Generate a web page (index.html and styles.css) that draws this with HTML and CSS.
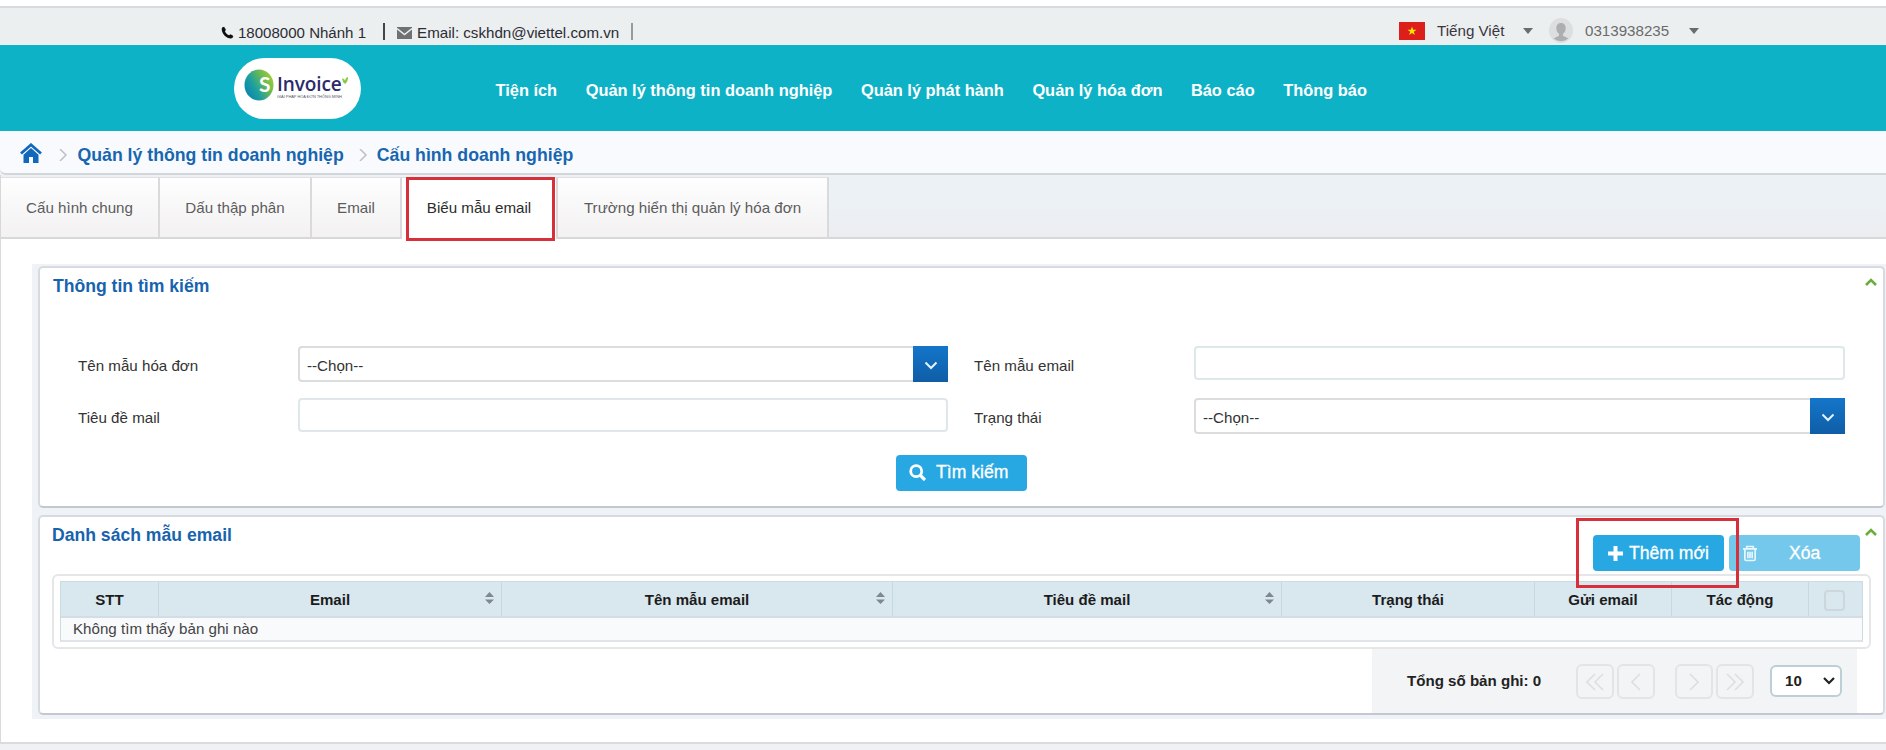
FILE: index.html
```html
<!DOCTYPE html>
<html lang="vi">
<head>
<meta charset="utf-8">
<title>SInvoice</title>
<link rel="stylesheet" href="styles.css">
</head>
<body>
<div class="topbar">
  <div class="contact">
    <svg class="phone" width="13" height="13" viewBox="0 0 14 14"><path d="M3.300.8 1.200 1.600C.2 3.400.9 7.300 3.700 10.200S10.300 13.900 12.300 13L13.300 10.900 10.300 9 8.700 10C7.300 9.700 4.600 7 4.300 5.600L5.300 4Z"/></svg>
    <span>18008000 Nhánh 1</span><i class="bar"></i>
    <svg class="mail" width="15" height="12" viewBox="0 0 15 12"><path fill="#6f7173" d="M0 0H15V12H0Z"/><path d="M0 1.500 7.500 7.500 15 1.500" fill="none" stroke="#ebeff0" stroke-width="1.500"/></svg>
    <span>Email: cskhdn@viettel.com.vn</span><i class="bar light"></i>
  </div>
  <div class="account">
    <svg width="26" height="18" viewBox="0 0 26 18"><path fill="#dc1f1a" d="M0 0H26V18H0Z"/><path fill="#ffe600" d="m13 4.500 1.100 3.200h3.400l-2.700 2 1 3.200L13 11l-2.800 1.900 1-3.200-2.700-2h3.400Z"/></svg>
    <span class="lang">Tiếng Việt</span><i class="caret"></i>
    <svg class="avatar" width="24" height="25" viewBox="0 0 24 25"><ellipse cx="12" cy="12.500" rx="12" ry="12.500" fill="#dcdedf"/><path fill="#adaeb0" d="M12 5c-3 0-4.700 2-4.700 5 0 2.600 1 4.600 2.700 5.700v2.100L4.600 20.600A12 12.500 0 0 0 19.400 20.600L14 17.800v-2.100c1.700-1.100 2.700-3.100 2.700-5.700 0-3-1.700-5-4.700-5Z"/></svg>
    <span class="user">0313938235</span><i class="caret"></i>
  </div>
</div>
<header class="header">
  <div class="logo">
    <svg class="mark" width="30" height="32" viewBox="0 0 30 32"><defs><linearGradient id="lg" x1="0" y1=".8" x2="1" y2=".2"><stop offset="0" stop-color="#0c80b0"/><stop offset=".35" stop-color="#1c9fa0"/><stop offset=".7" stop-color="#6dbb50"/><stop offset="1" stop-color="#a4cf3a"/></linearGradient></defs><ellipse cx="15" cy="16" rx="14.500" ry="15.500" fill="url(#lg)"/><text class="mark-s" x="15" y="23">S</text></svg>
    <div class="words"><span class="word">Invoice</span><span class="tagline">GIẢI PHÁP HÓA ĐƠN THÔNG MINH</span></div>
    <svg class="leaf" width="6" height="7" viewBox="0 0 6 7"><path d="M0 1.500Q2 1 3 3.500 4 0 6 0 6 5 3 7 .5 5 0 1.500Z" fill="#8dc63f"/></svg>
  </div>
  <nav class="nav"><a>Tiện ích</a><a>Quản lý thông tin doanh nghiệp</a><a>Quản lý phát hành</a><a>Quản lý hóa đơn</a><a>Báo cáo</a><a>Thông báo</a></nav>
</header>
<div class="crumbs">
  <svg class="home" width="22" height="20" viewBox="0 0 22 20"><path d="M1 10.500 11 1.800 21 10.500" fill="none" stroke="#1268b9" stroke-width="2.800"/><path fill="#1268b9" d="m11 5 7.500 6.800V20H13v-6H9v6H3.500v-8.200Z"/></svg>
  <svg class="sep" width="8" height="12" viewBox="0 0 8 12"><path d="m1 0 6 6-6 6"/></svg>
  <a>Quản lý thông tin doanh nghiệp</a>
  <svg class="sep second" width="8" height="12" viewBox="0 0 8 12"><path d="m1 0 6 6-6 6"/></svg>
  <a>Cấu hình doanh nghiệp</a>
</div>
<div class="tabs">
  <div class="tab t1">Cấu hình chung</div><div class="tab t2">Dấu thập phân</div><div class="tab t3">Email</div><div class="tab active">Biểu mẫu email<i class="mark-box"></i></div><div class="tab t5">Trường hiển thị quản lý hóa đơn</div>
</div>
<main class="content">
  <div class="stack">
    <section class="panel search">
      <div class="panel-head"><h2>Thông tin tìm kiếm</h2><svg class="fold" width="12" height="8" viewBox="0 0 12 8"><path d="m1 7 5-5 5 5"/></svg></div>
      <div class="form">
        <label>Tên mẫu hóa đơn</label>
        <div class="select"><span>--Chọn--</span><b><svg width="14" height="9" viewBox="0 0 14 9"><path d="m1.500 1.500 5.500 5.500 5.500-5.500"/></svg></b></div>
        <label>Tên mẫu email</label><div class="input"></div>
        <label>Tiêu đề mail</label><div class="input"></div>
        <label>Trạng thái</label>
        <div class="select"><span>--Chọn--</span><b><svg width="14" height="9" viewBox="0 0 14 9"><path d="m1.500 1.500 5.500 5.500 5.500-5.500"/></svg></b></div>
      </div>
      <div class="btn find"><svg width="17" height="17" viewBox="0 0 17 17"><circle cx="7.200" cy="7.200" r="5.500" fill="none" stroke="#fff" stroke-width="2.800"/><path d="m11 11 5 5" stroke="#fff" stroke-width="3.200"/></svg>Tìm kiếm</div>
    </section>
    <section class="panel list">
      <div class="panel-head"><h2>Danh sách mẫu email</h2>
        <div class="actions">
          <div class="btn add"><svg width="15" height="15" viewBox="0 0 15 15"><path d="M7.500 0v15M0 7.500h15" stroke="#fff" stroke-width="4"/></svg>Thêm mới<i class="mark-box"></i></div>
          <div class="btn del"><svg width="14" height="17" viewBox="0 0 15 17" fill="none" stroke="#e9f7fd" stroke-width="1.800"><path d="M0 3.500h15M4 3.500V1h7v2.500M2 4v10.500q0 1.500 1.500 1.500h8q1.500 0 1.500-1.500V4M5.200 6.500v7M7.500 6.500v7M9.800 6.500v7"/></svg><span>Xóa</span></div>
        </div>
        <svg class="fold" width="12" height="8" viewBox="0 0 12 8"><path d="m1 7 5-5 5 5"/></svg></div>
      <div class="table-wrap">
        <div class="table">
          <div class="row head">
            <div>STT</div>
            <div>Email<svg class="sort" width="9" height="12" viewBox="0 0 9 12"><path d="M0 5 4.500 0 9 5ZM0 7.500h9L4.500 12Z"/></svg></div>
            <div>Tên mẫu email<svg class="sort" width="9" height="12" viewBox="0 0 9 12"><path d="M0 5 4.500 0 9 5ZM0 7.500h9L4.500 12Z"/></svg></div>
            <div>Tiêu đề mail<svg class="sort" width="9" height="12" viewBox="0 0 9 12"><path d="M0 5 4.500 0 9 5ZM0 7.500h9L4.500 12Z"/></svg></div>
            <div>Trạng thái</div><div>Gửi email</div><div>Tác động</div><div><i class="check"></i></div>
          </div>
          <div class="empty">Không tìm thấy bản ghi nào</div>
        </div>
      </div>
      <div class="pager">
        <span class="total">Tổng số bản ghi: 0</span>
        <div class="pg"><svg width="18" height="18" viewBox="0 0 18 18"><path d="M9 1 1 9l8 8M17 1 9 9l8 8"/></svg></div>
        <div class="pg"><svg width="10" height="18" viewBox="0 0 10 18"><path d="M9 1 1 9l8 8"/></svg></div>
        <div class="pg next"><svg width="10" height="18" viewBox="0 0 10 18"><path d="m1 1 8 8-8 8"/></svg></div>
        <div class="pg"><svg width="18" height="18" viewBox="0 0 18 18"><path d="m1 1 8 8-8 8M9 1l8 8-8 8"/></svg></div>
        <div class="size">10<svg width="12" height="8" viewBox="0 0 12 8"><path d="m1 1 5 5 5-5" fill="none" stroke="#222" stroke-width="2.200"/></svg></div>
      </div>
    </section>
  </div>
</main>
</body>
</html>
```
FILE: styles.css
```css
* { box-sizing: border-box; }
body { margin: 0; width: 1886px; height: 750px; overflow: hidden; background: #f0f1f3; font: 15.15px/18px "Liberation Sans", Arial, sans-serif; color: #333; white-space: nowrap; }
svg { display: block; flex: none; }
.topbar { height: 45px; border-top: 6px solid #fff; background: #ebeff0; box-shadow: inset 0 2px 0 #d8dbde; display: flex; justify-content: space-between; padding: 0 187px 0 221px; }
.contact { display: flex; align-items: center; height: 39px; padding-top: 14px; color: #2c2c34; font-size: 15.05px; }
.phone { margin: 0 4px 0 0; fill: #111; }
.bar { width: 2px; height: 17px; background: #444; margin: -2px 12px 0 17px; }
.mail { margin-right: 5px; }
.contact span:nth-of-type(2) { font-size: 15.15px; }
.bar.light { background: #999; margin-left: 12px; }
.account { display: flex; align-items: center; align-self: flex-start; margin-top: 12px; height: 25px; }
.lang { margin: 0 18px 0 12px; width: 68px; color: #3a3540; }
.caret { border: solid transparent; border-width: 6px 5.5px 0; border-top-color: #6b6b6b; }
.avatar { margin: 0 12px 0 16px; }
.user { color: #6b6b6b; margin: 0 19px 0 0; width: 85px; }
.header { height: 86px; background: #0db2c6; display: flex; padding-left: 234px; }
.logo { width: 127px; height: 61px; margin-top: 13px; border-radius: 32px; background: #fff; display: flex; padding: 11px 0 0 10px; }
.mark-s { font: 700 21px Lato, sans-serif; fill: #fff; }
.words { display: flex; flex-direction: column; padding: 5px 0 0 3px; width: 68px; }
.word { font: 600 19px/20px "Open Sans", sans-serif; color: #2b2a6b; letter-spacing: -.1px; }
.tagline { font: 3.900px/5px "Liberation Sans", Arial, sans-serif; color: #556; }
.leaf { margin-top: 8px; }
.nav { display: flex; gap: 28.5px; margin-left: 134.500px; padding-top: 36px; font-weight: 700; font-size: 16.400px; color: #fff; }
.crumbs { height: 44px; background: #f9fafd; border-bottom: 2px solid #d3d6d9; display: flex; align-items: center; padding: 0 0 0 20px; font-weight: 700; font-size: 17.700px; color: #1766b0; line-height: 20px; border-bottom-left-radius: 6px; }
.crumbs a { margin-top: 6px; }
.home { margin-top: 1px; }
.sep { margin: 5px 10.500px 0 17px; fill: none; stroke: #bcbfc4; stroke-width: 1.500; }
.sep.second { margin: 5px 10px 0 15px; }
.tabs { height: 64px; background: linear-gradient(#ecf1f6 50%, #ecedf0); border-bottom: 2px solid #d6d8da; padding-top: 2px; display: flex; border-left: 1px solid #d6d8da; }
.tab { position: relative; height: 60px; border-right: 2px solid #dadadc; border-top: 1px solid #e0e0e2; background: linear-gradient(#fefefe, #f3f1f2); text-align: center; padding-top: 21px; color: #5c5c5c; }
.t1 { width: 159px; }
.t2 { width: 152px; }
.t3 { width: 90px; }
.t5 { width: 271px; }
.tab.active { width: 156px; height: 62px; background: #fff; color: #2c2c2c; }
.mark-box { position: absolute; border: 3px solid #d6303a; }
.tab .mark-box { left: 4px; top: -1px; width: 149px; height: 64px; }
.content { height: 505px; border-left: 1px solid #d8dadc; border-bottom: 2px solid #d9dbde; background: #fff; padding: 25px 0 0 31px; }
.stack { height: 455px; background: #eff2f6; padding: 2px 1px 0 6px; }
.panel { background: #fff; border: 2px solid #d7dbe0; border-bottom-color: #c3c8d0; border-radius: 5px; }
.search { height: 242px; }
.list { height: 200px; margin-top: 7px; }
.panel-head { display: flex; justify-content: space-between; padding: 9px 6px 0 13px; height: 58px; }
.panel-head h2 { margin: 0; font-size: 17.600px; line-height: 18px; color: #1763ae; }
.fold { fill: none; stroke: #6aae3a; stroke-width: 2.600; }
.search .fold { margin-top: 1px; }
.form { display: grid; grid-template-columns: 220px 650px 246px 651px; column-gap: 0; row-gap: 16px; padding-left: 38px; margin-top: 20px; }
.form label { padding-top: 11px; height: 36px; }
.form label:nth-of-type(even) { padding-left: 26px; }
.input { height: 34px; border: 2px solid #dee8ea; border-radius: 4px; }
.select { height: 36px; border: 2px solid #dadcde; border-radius: 4px; display: flex; justify-content: space-between; padding-left: 7px; }
.select span { padding-top: 9px; }
.select b { width: 35px; height: 36px; margin: -2px -2px 0 0; background: linear-gradient(#1476ca, #0f5da6); display: grid; place-items: center; padding-top: 3px; }
.select svg { fill: none; stroke: #e5f3ff; stroke-width: 2; }
.btn { width: 131px; height: 36px; background: #27a8e2; border-radius: 4px; color: #fff; font-size: 17.600px; display: flex; align-items: center; -webkit-text-stroke: .3px #fff; }
.find { margin: 21px 0 0 856px; padding-left: 13px; gap: 10px; padding-bottom: 2px; }
.list .panel-head { padding: 0 6px 0 12px; height: 57px; }
.list h2 { padding-top: 9px; }
.actions { display: flex; gap: 5px; margin: 18px 0 0 auto; }
.list .fold { margin: 11px 0 0 5px; }
.add { position: relative; padding-left: 15px; gap: 6px; }
.add .mark-box { left: -17px; top: -17px; width: 163px; height: 70px; z-index: 2; }
.del { background: #74c8ec; padding-left: 14px; }
.del span { margin-left: 32px; }
.table-wrap { margin-left: 12px; width: 1819px; height: 75px; border: 2px solid #e4e6e8; border-radius: 6px; padding: 5px 6px; }
.table { width: 1803px; border: 1px solid #cbdbe2; height: 61px; border-bottom: 2px solid #dfe4ea; background: #f9fafc; }
.row { display: grid; grid-template-columns: 98px 343px 391px 389px 253px 137px 137px 53px; height: 36px; background: #d9e7ee; border-bottom: 2px solid #d2dde4; font-weight: 700; font-size: 15.050px; color: #1c1c1c; }
.row > div { position: relative; border-right: 1px solid #c8d8e0; text-align: center; padding-top: 9px; }
.row > div:last-child { border: 0; }
.sort { position: absolute; right: 7px; top: 10px; fill: #7d8891; }
.check { display: block; width: 21px; height: 21px; border: 2px solid #ccd7dc; border-radius: 4px; margin: -1px auto 0 15px; }
.empty { padding: 2px 0 0 12px; color: #444; }
.pager { margin-left: auto; margin-right: 26px; width: 485px; height: 64px; background: #f3f4f6; display: flex; align-items: flex-start; padding: 15px 15px 0 35px; font-weight: 700; font-size: 15.100px; color: #222; }
.total { width: 169px; padding-top: 8px; }
.pg { width: 38px; height: 35px; border: 2px solid #e2e4e6; border-radius: 6px; display: grid; place-items: center; margin-right: 3px; }
.pg svg { fill: none; stroke: #dcdfe1; stroke-width: 1.600; }
.next { margin-left: 17px; }
.size { width: 72px; height: 32px; border: 2px solid #bccfd6; border-radius: 6px; background: #fff; margin: 1px 0 0 13px; display: flex; align-items: center; justify-content: space-between; padding: 0 5px 0 13px; }
```
